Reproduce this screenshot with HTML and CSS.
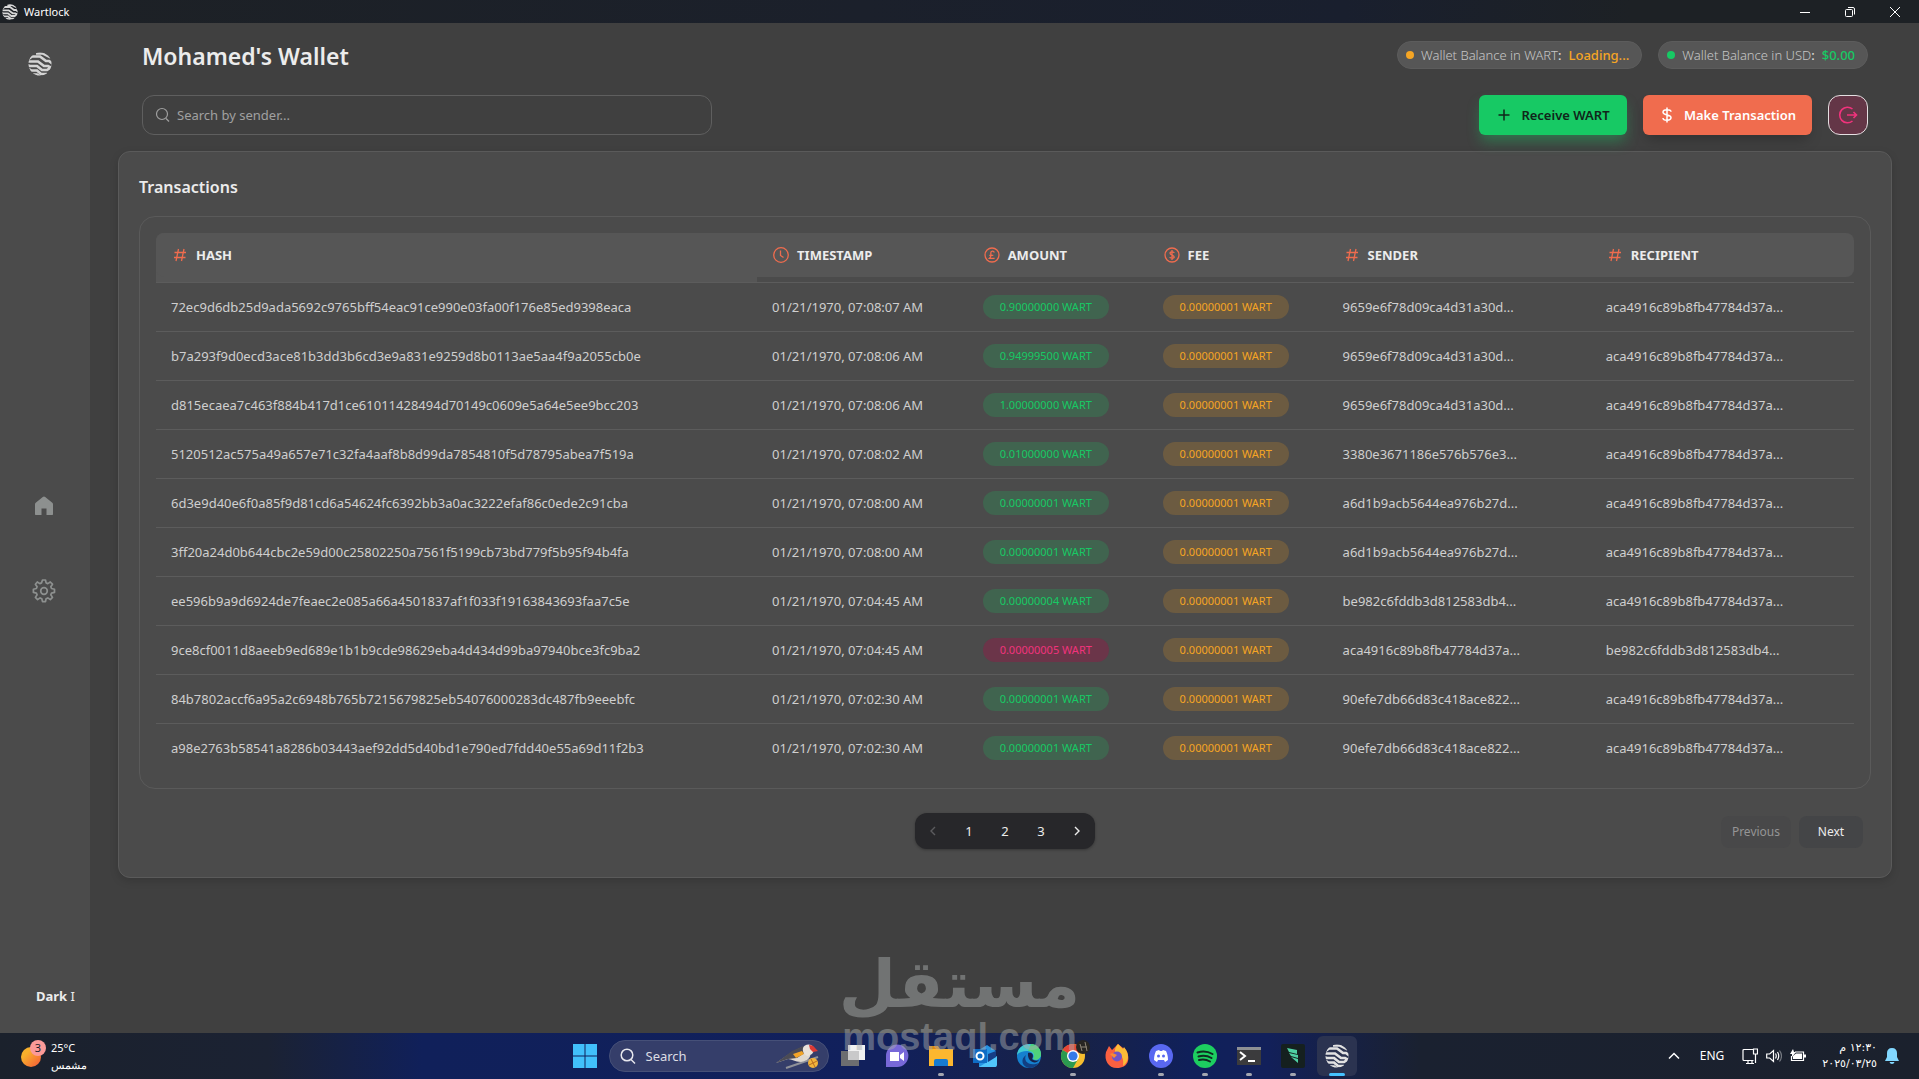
FILE: index.html
```html
<!DOCTYPE html>
<html lang="en">
<head>
<meta charset="utf-8">
<title>Wartlock</title>
<link rel="stylesheet" href="styles.css">
</head>
<body>
<svg class="defs" aria-hidden="true">
  <defs>
    <clipPath id="ball"><circle cx="12" cy="12" r="11.5"/></clipPath>
    <symbol id="logo" viewBox="0 0 24 24">
      <g clip-path="url(#ball)" fill="none" stroke="currentColor" stroke-width="2.7">
        <path d="M8 1.500h7l8 4M-1 8l5-3.500h8l6 4.500h3l4 3M-1 9.500h11l6 4.500h4l5 3M-1 13l3 1h7l5 4h5l6-4M-1 16l4 2.500h6l4 3.500h6M5 22.500h4l3 2"/>
      </g>
    </symbol>
    <symbol id="hash" viewBox="0 0 16 16">
      <path d="M6.500 2L4 14M12 2L9.500 14M2.500 5.500h11.500M2 10.500h11.500" fill="none" stroke="currentColor" stroke-width="1.300"/>
    </symbol>
  </defs>
</svg>
<div class="screen">
  <header class="titlebar">
    <svg class="titlebar-logo"><use href="#logo"/></svg>
    <span class="titlebar-name">Wartlock</span>
    <button class="winbtn" aria-label="Minimize"><svg viewBox="0 0 12 12"><path d="M1 6.500h10"/></svg></button>
    <button class="winbtn" aria-label="Restore"><svg viewBox="0 0 12 12"><rect x="1.500" y="3.500" width="7" height="7" rx="1"/><path d="M4 1.500h5a1.500 1.500 0 0 1 1.500 1.500v5.500"/></svg></button>
    <button class="winbtn" aria-label="Close"><svg viewBox="0 0 12 12"><path d="M1 1l10 10M11 1L1 11"/></svg></button>
  </header>

  <div class="app">
    <nav class="sidebar">
      <a class="brand" href="#" aria-label="Wartlock"><svg><use href="#logo"/></svg></a>
      <div class="nav-links">
        <a href="#" aria-label="Home"><svg viewBox="0 0 24 24" fill="currentColor"><path d="M12 2.500c.5 0 .8.2 1.200.5l6.800 5.500c.7.500 1 1 1 1.800V20c0 .7-.3 1-1 1h-5.500v-6.500h-5V21H4c-.7 0-1-.3-1-1v-9.700c0-.8.3-1.300 1-1.800L10.800 3c.4-.3.7-.5 1.200-.5z"/></svg></a>
        <a href="#" aria-label="Settings"><svg viewBox="0 0 24 24" fill="none" stroke="currentColor" stroke-width="1.700" stroke-linejoin="round"><circle cx="12" cy="12" r="3.300"/><path d="M10.500 1h3l.6 2.900 1.700.7L18.300 3l2.200 2.200-1.700 2.600.7 1.700 3 .8v3.100l-3 .7-.7 1.700 1.700 2.600-2.200 2.200-2.500-1.700-1.700.8-.6 2.900h-3l-.7-2.900-1.700-.8-2.500 1.700-2.200-2.200 1.700-2.600-.7-1.700-3-.7v-3.100l3-.8.7-1.700-1.700-2.600L5.300 3l2.500 1.600 1.700-.7z"/></svg></a>
      </div>
      <div class="theme">Dark <span>I</span></div>
    </nav>

    <main class="main">
      <div class="top">
        <h1>Mohamed's Wallet</h1>
        <div class="balance warn"><i class="dot"></i><span>Wallet Balance in WART<b>:</b></span><strong>Loading...</strong></div>
        <div class="balance good"><i class="dot"></i><span>Wallet Balance in USD<b>:</b></span><strong>$0.00</strong></div>
      </div>
      <div class="tools">
        <label class="search">
          <svg viewBox="0 0 16 16"><circle cx="7" cy="7" r="5.500"/><path d="M11 11.500l3 3"/></svg>
          <input type="text" placeholder="Search by sender..." aria-label="Search by sender">
        </label>
        <button class="btn receive"><svg viewBox="0 0 16 16"><path d="M8 2.500v11M2.500 8h11"/></svg>Receive WART</button>
        <button class="btn send"><svg viewBox="0 0 16 16"><path d="M8 .5v15M12 4.800C12 3.400 10.500 2.800 8 2.800S4 3.600 4 5.300C4 8.800 12 7 12 10.600c0 1.800-1.500 2.600-4 2.600s-4-.7-4-2.300"/></svg>Make Transaction</button>
        <button class="logout" aria-label="Log out"><svg viewBox="0 0 20 20"><path d="M14.500 4a7.800 7.800 0 1 0 0 12M9 10h9M15.500 7l3 3-3 3"/></svg></button>
      </div>

      <section class="card">
        <h2>Transactions</h2>
        <div class="table-box">
          <table>
            <colgroup><col class="c-hash"><col class="c-time"><col class="c-amount"><col class="c-fee"><col class="c-party"><col class="c-party"></colgroup>
            <thead>
              <tr>
                <th><div><svg><use href="#hash"/></svg>HASH</div></th>
                <th><div><svg viewBox="0 0 16 16"><circle cx="8" cy="8" r="7.300"/><path d="M7.500 3.500v5l3 2"/></svg>TIMESTAMP</div></th>
                <th><div><svg viewBox="0 0 16 16"><circle cx="8" cy="8" r="7"/><path d="M10.300 5.500c-.6-1.800-3.500-1.800-3.500.6 0 1.700.8 3.500-1.200 5.200h5M5.300 8.300h4"/></svg>AMOUNT</div></th>
                <th><div><svg viewBox="0 0 16 16"><circle cx="8" cy="8" r="7"/><path d="M8 3v10M10.200 6C10 4.500 6 4.300 6 6.200S10.200 8 10.200 9.900 6 11.500 5.800 10"/></svg>FEE</div></th>
                <th><div><svg><use href="#hash"/></svg>SENDER</div></th>
                <th><div><svg><use href="#hash"/></svg>RECIPIENT</div></th>
              </tr>
            </thead>
            <tbody>
              <tr><td>72ec9d6db25d9ada5692c9765bff54eac91ce990e03fa00f176e85ed9398eaca</td><td>01/21/1970, 07:08:07 AM</td><td><span class="pill in">0.90000000 WART</span></td><td><span class="pill fee">0.00000001 WART</span></td><td>9659e6f78d09ca4d31a30d...</td><td>aca4916c89b8fb47784d37a...</td></tr>
              <tr><td>b7a293f9d0ecd3ace81b3dd3b6cd3e9a831e9259d8b0113ae5aa4f9a2055cb0e</td><td>01/21/1970, 07:08:06 AM</td><td><span class="pill in">0.94999500 WART</span></td><td><span class="pill fee">0.00000001 WART</span></td><td>9659e6f78d09ca4d31a30d...</td><td>aca4916c89b8fb47784d37a...</td></tr>
              <tr><td>d815ecaea7c463f884b417d1ce61011428494d70149c0609e5a64e5ee9bcc203</td><td>01/21/1970, 07:08:06 AM</td><td><span class="pill in">1.00000000 WART</span></td><td><span class="pill fee">0.00000001 WART</span></td><td>9659e6f78d09ca4d31a30d...</td><td>aca4916c89b8fb47784d37a...</td></tr>
              <tr><td>5120512ac575a49a657e71c32fa4aaf8b8d99da7854810f5d78795abea7f519a</td><td>01/21/1970, 07:08:02 AM</td><td><span class="pill in">0.01000000 WART</span></td><td><span class="pill fee">0.00000001 WART</span></td><td>3380e3671186e576b576e3...</td><td>aca4916c89b8fb47784d37a...</td></tr>
              <tr><td>6d3e9d40e6f0a85f9d81cd6a54624fc6392bb3a0ac3222efaf86c0ede2c91cba</td><td>01/21/1970, 07:08:00 AM</td><td><span class="pill in">0.00000001 WART</span></td><td><span class="pill fee">0.00000001 WART</span></td><td>a6d1b9acb5644ea976b27d...</td><td>aca4916c89b8fb47784d37a...</td></tr>
              <tr><td>3ff20a24d0b644cbc2e59d00c25802250a7561f5199cb73bd779f5b95f94b4fa</td><td>01/21/1970, 07:08:00 AM</td><td><span class="pill in">0.00000001 WART</span></td><td><span class="pill fee">0.00000001 WART</span></td><td>a6d1b9acb5644ea976b27d...</td><td>aca4916c89b8fb47784d37a...</td></tr>
              <tr><td>ee596b9a9d6924de7feaec2e085a66a4501837af1f033f19163843693faa7c5e</td><td>01/21/1970, 07:04:45 AM</td><td><span class="pill in">0.00000004 WART</span></td><td><span class="pill fee">0.00000001 WART</span></td><td>be982c6fddb3d812583db4...</td><td>aca4916c89b8fb47784d37a...</td></tr>
              <tr><td>9ce8cf0011d8aeeb9ed689e1b1b9cde98629eba4d434d99ba97940bce3fc9ba2</td><td>01/21/1970, 07:04:45 AM</td><td><span class="pill out">0.00000005 WART</span></td><td><span class="pill fee">0.00000001 WART</span></td><td>aca4916c89b8fb47784d37a...</td><td>be982c6fddb3d812583db4...</td></tr>
              <tr><td>84b7802accf6a95a2c6948b765b7215679825eb54076000283dc487fb9eeebfc</td><td>01/21/1970, 07:02:30 AM</td><td><span class="pill in">0.00000001 WART</span></td><td><span class="pill fee">0.00000001 WART</span></td><td>90efe7db66d83c418ace822...</td><td>aca4916c89b8fb47784d37a...</td></tr>
              <tr><td>a98e2763b58541a8286b03443aef92dd5d40bd1e790ed7fdd40e55a69d11f2b3</td><td>01/21/1970, 07:02:30 AM</td><td><span class="pill in">0.00000001 WART</span></td><td><span class="pill fee">0.00000001 WART</span></td><td>90efe7db66d83c418ace822...</td><td>aca4916c89b8fb47784d37a...</td></tr>
            </tbody>
          </table>
        </div>
        <div class="pager">
          <div class="pages">
            <button disabled aria-label="Previous page"><svg viewBox="0 0 12 12"><path d="M8 2L4 6l4 4"/></svg></button>
            <button>1</button><button>2</button><button>3</button>
            <button aria-label="Next page"><svg viewBox="0 0 12 12"><path d="M4 2l4 4-4 4"/></svg></button>
          </div>
          <div class="steps"><button disabled>Previous</button><button>Next</button></div>
        </div>
      </section>
    </main>
  </div>

  <footer class="taskbar">
    <div class="weather">
      <svg viewBox="0 0 28 30"><defs><linearGradient id="sun" x1="0" y1="0" x2="1" y2="1"><stop offset=".3" stop-color="#f9b02c"/><stop offset="1" stop-color="#f4563a"/></linearGradient></defs><circle cx="11" cy="18" r="10" fill="url(#sun)"/><circle cx="18" cy="9" r="8" fill="#fb9a98"/><text x="18" y="13" text-anchor="middle" font-size="11" fill="#1b212e">3</text></svg>
      <div><div>25°C</div><div lang="ar">مشمس</div></div>
    </div>
    <div class="apps">
      <button aria-label="Start"><svg viewBox="0 0 24 24" fill="#41c0fb"><path d="M0 0h11.500v11.500H0zM12.500 0H24v11.500H12.500zM0 12.500h11.500V24H0zM12.500 12.500H24V24H12.500z"/></svg></button>
      <button class="task-search">
        <svg class="glass" viewBox="0 0 16 16"><circle cx="7" cy="7" r="5.800"/><path d="M11 11.500l4 4"/></svg>
        <span>Search</span>
        <svg class="bird" viewBox="0 0 44 26"><path d="M10 25L42 14" stroke="#8f9199" stroke-width="2"/><path d="M0 20l16-11 10-5 8 4c2 7-3 10-9 11-6 0-9-3-13-3z" fill="#ded8cf"/><path d="M0 20L16 8l11-5 3 6-9 6-9 1z" fill="#4b4b55"/><path d="M17 11l9-3 2 3-8 4z" fill="#f3a528"/><path d="M27 5c1-4 8-5 10-1l1 4-2 3-4 2c-3 0-6-4-5-8z" fill="#e9e2da"/><path d="M33 2c3 0 5 1 6 3l3 3-5 1-3-3z" fill="#dd3a35"/><circle cx="37" cy="20" r="5" fill="#f2b43b"/><path d="M33 22l8-4M35 16l4 8" stroke="#b86c22"/></svg>
      </button>
      <button aria-label="Task view"><svg viewBox="0 0 24 24"><path d="M0 7h18v15H0z" fill="#6c6d70"/><path d="M7 1h17v15H7z" fill="#f1f1f1"/><path d="M7 7h11v9H7z" fill="#c9c9ca"/></svg></button>
      <button aria-label="Chat"><svg viewBox="0 0 24 24"><path d="M1 23V12A11.200 11.200 0 1 1 12 23z" fill="#7768d8"/><path d="M5 8h9v9H5zM15 11l4-3v9l-4-3z" fill="#fff"/></svg></button>
      <button class="run" aria-label="File Explorer"><svg viewBox="0 0 24 24"><path d="M0 2h9l2 3H0z" fill="#e08b0f"/><path d="M0 5h24v17H0z" fill="#fcb72f"/><path d="M5 22v-5q0-2 2-2h10q2 0 2 2v5z" fill="#177bd0"/></svg></button>
      <button aria-label="Outlook"><svg viewBox="0 0 24 24"><path d="M6 6l8-5 9 6v16H6z" fill="#2693e2"/><path d="M6 23l18-11v9q0 2-2 2z" fill="#50c5fa"/><path d="M15 10l8-3v6l-8 5z" fill="#163e86"/><path d="M0 5h14v14H0z" fill="#0f6cc4"/><circle cx="7" cy="12" r="3.500" fill="none" stroke="#fff" stroke-width="2"/></svg></button>
      <button aria-label="Edge"><svg viewBox="0 0 24 24"><circle cx="12" cy="12" r="12" fill="#1580ce"/><path d="M0 11C1-3 23-4 24 10c0 5-5 7-8 5 2-4-1-8-6-8-4 0-8 1-10 4z" fill="#41c9d2"/><path d="M14 0c6 0 10 5 10 10s-5 7-8 5c3-5 0-8-5-8z" fill="#4fd27b"/><path d="M9 11c-3 6 3 12 13 8-3 4-7 5-10 5-7-1-9-9-3-13z" fill="#123f82"/><path d="M11 9c5-1 6 3 4 6 2 2 5 2 7 1-3 5-12 2-11-7z" fill="#16214a"/></svg></button>
      <button class="run" aria-label="Chrome"><svg class="wide" viewBox="0 0 30 24"><circle cx="12" cy="12" r="12" fill="#f6be2f"/><path d="M12 12L1.600 6A12 12 0 0 1 22.400 6z" fill="#e94436"/><path d="M12 12L1.600 6A12 12 0 0 0 12 24l5-9z" fill="#2b9a50"/><circle cx="12" cy="12" r="6" fill="#fff"/><circle cx="12" cy="12" r="4.600" fill="#3479ea"/><circle cx="22" cy="3" r="7" fill="#272522"/><path d="M19 0l2 7M24-2l2 9M20 3h6" stroke="#8f8778"/></svg></button>
      <button aria-label="Firefox"><svg viewBox="0 0 24 24"><path d="M1 8l3-6 3 4 6-6 5 4 3 2c5 9 2 18-9 18C3 24-1 16 1 8z" fill="#fa6040"/><path d="M13 0l5 5 1-2c6 7 5 15-1 19 1-8-1-10-5-12-5-1-3-7 0-10z" fill="#fcbc37"/><circle cx="12" cy="12.500" r="5" fill="#7155c8"/><path d="M5 10c3-2 5 0 7 1l-3 3z" fill="#fc8a35"/></svg></button>
      <button class="run" aria-label="Discord"><svg viewBox="0 0 24 24"><circle cx="12" cy="12" r="12" fill="#5968f1"/><path d="M5 16c0-4 1-7 2-9l3-1 1 1h2l1-1 3 1c1 2 2 5 2 9l-3 2-1-2H9l-1 2z" fill="#fff"/><circle cx="9.500" cy="12" r="1.500" fill="#5968f1"/><circle cx="14.500" cy="12" r="1.500" fill="#5968f1"/></svg></button>
      <button class="run" aria-label="Spotify"><svg viewBox="0 0 24 24"><circle cx="12" cy="12" r="12" fill="#1dce60"/><path d="M4.500 8.500q8-2.500 15 1.500M5.500 12.500q7-2 13 1.500M6 16q6-1.500 11 1.500" fill="none" stroke="#102a20" stroke-width="2" stroke-linecap="round"/></svg></button>
      <button class="run" aria-label="Terminal"><svg viewBox="0 0 24 24"><path d="M0 3h24v18H0z" fill="#3b3b3d"/><path d="M0 3h24v3H0z" fill="#8e9094"/><path d="M3 8l5 4-5 4M11 17h7" fill="none" stroke="#fff" stroke-width="2"/></svg></button>
      <button class="run" aria-label="Warp"><svg viewBox="0 0 24 24"><rect width="24" height="24" rx="2" fill="#15201f"/><path d="M6 4l10 2v4L8 8zM8 9l9 2v3l-7-2zM10 13l7 2v4z" fill="#4fd0a3"/></svg></button>
      <button class="active" aria-label="Wartlock"><svg><use href="#logo"/></svg></button>
    </div>
    <div class="tray">
      <svg class="chev" viewBox="0 0 12 12"><path d="M1 8.500l5-5 5 5"/></svg>
      <span class="lang">ENG</span>
      <svg viewBox="0 0 16 16"><path d="M11 1.500H2q-1 0-1 1v9q0 1 1 1h9.500M4 15.500h8M6 12.500v3M10 12.500v3M11.500 1h4v5h-4zM13.500 6v9"/></svg>
      <svg viewBox="0 0 16 16"><path d="M.7 6v4h3l3.800 3.500v-11L3.700 6zM9.500 5.500q1.500 2.500 0 5M11.500 4q2.500 4 0 8"/><path d="M13.500 2.500q4 5.500 0 11" opacity=".4"/></svg>
      <svg viewBox="0 0 16 16"><path d="M5 4h8.500v8.500h-12V8"/><path d="M6 5.500h6v5.500H3V8zM3 1L0 6h2v3l4-5H4zM14 6.500h2v3h-2z" fill="currentColor" stroke="none"/></svg>
      <div class="clock" lang="ar" dir="rtl"><div>١٢:٣٠ م</div><div dir="ltr">٢٠٢٥/٠٣/٢٥</div></div>
      <svg class="bell" viewBox="0 0 14 16"><path d="M7 0c3.300 0 5 2 5 5v4l2 4H0l2-4V5c0-3 1.700-5 5-5zM4.500 14h5Q9 16 7 16t-2.500-2z"/></svg>
    </div>
  </footer>

  <div class="watermark"><div class="wm-ar" lang="ar">مستقل</div><div class="wm-en">mostaql.com</div></div>
</div>
</body>
</html>
```
FILE: styles.css
```css
* { box-sizing: border-box; }

body {
  margin: 0;
  background: #404040;
  color: #ececec;
  font: 13px/20px "Noto Sans", "Open Sans", sans-serif;
}

button, input { font: inherit; color: inherit; }
button { border: 0; padding: 0; background: none; cursor: pointer; }
a { color: inherit; }
.defs { position: absolute; width: 0; height: 0; }

.screen {
  position: relative;
  display: flex;
  flex-direction: column;
  min-height: 100vh;
}

/* Window title bar */
.titlebar {
  display: flex;
  align-items: center;
  height: 23px;
  padding: 0 2px;
  background: linear-gradient(90deg, #1d2125 0%, #1b202b 45%, #191f2e 70%, #1d2125 85%);
  color: #fff;
  font-size: 11px;
}
.titlebar-logo { width: 16px; height: 16px; color: #d8d8d8; }
.titlebar-name { margin-left: 6px; flex: 1; }
.winbtn { width: 45px; height: 22px; display: grid; place-items: center; }
.winbtn svg { width: 12px; height: 12px; fill: none; stroke: #fff; }

.app { flex: 1; display: flex; }

/* Sidebar */
.sidebar {
  width: 90px;
  flex: none;
  display: flex;
  flex-direction: column;
  background: #4b4b4b;
}
.brand { margin: 29px 0 0 28px; color: #d4d4d4; }
.brand svg { display: block; width: 24px; height: 24px; }
.nav-links {
  flex: 1;
  display: flex;
  flex-direction: column;
  align-items: center;
  justify-content: center;
  gap: 61px;
  padding: 34px 2px 0 0;
  color: #8d908f;
}
.nav-links svg { display: block; width: 24px; height: 24px; }
.theme { margin: 0 0 27px 36px; white-space: nowrap; font-weight: 700; }
.theme span { font-weight: 400; }

/* Main column */
.main { flex: 1; min-width: 0; padding: 18px 27px 0 28px; }
.top { display: flex; align-items: center; gap: 16px; padding: 0 24px; height: 28px; }
h1 { margin: 0; flex: 1; font-size: 23px; line-height: 28px; font-weight: 600; padding-top: 2px; }
.balance {
  display: flex;
  align-items: center;
  gap: 7px;
  height: 28px;
  padding: 0 12px 0 8px;
  border-radius: 14px;
  background: #565656;
  border: 1px solid #5c5c5c;
  color: #c6c6c6;
  font-weight: 300;
}
.balance b { color: #e4e4e4; font-weight: 400; }
.balance strong { font-weight: 500; }
.dot { width: 8px; height: 8px; border-radius: 50%; }
.warn strong { color: #f5a524; }
.warn .dot { background: #f5a524; }
.good strong { color: #17c964; }
.good .dot { background: #17c964; }

.tools { display: flex; gap: 16px; margin: 26px 0 16px; padding: 0 24px; height: 40px; }
.search {
  display: flex;
  align-items: center;
  gap: 6px;
  width: 570px;
  margin-right: auto;
  padding: 0 12px;
  border: 1px solid #5f5f5f;
  border-radius: 12px;
}
.search svg { width: 16px; height: 16px; fill: none; stroke: #a0a0a0; stroke-width: 1.2; }
.search input { flex: 1; border: 0; outline: 0; padding: 0; background: none; }
.search input::placeholder { color: #a0a0a0; opacity: 1; }
.btn {
  display: flex;
  align-items: center;
  justify-content: center;
  gap: 9px;
  border-radius: 6px;
  font-weight: 600;
}
.btn svg { width: 16px; height: 16px; fill: none; stroke: currentColor; stroke-width: 1.5; }
.receive { width: 148px; background: #17c964; color: #10251a; box-shadow: 0 8px 14px -2px rgba(23, 201, 100, .4); }
.send { width: 169px; background: #f06c4e; color: #fff; box-shadow: 0 8px 14px -4px rgba(0, 0, 0, .25); }
.logout {
  width: 40px;
  display: grid;
  place-items: center;
  border: 1px solid #e4dfe1;
  border-radius: 12px;
  background: #643647;
  color: #f0337c;
}
.logout svg { width: 20px; height: 20px; fill: none; stroke: currentColor; stroke-width: 1.6; }

/* Transactions card */
.card {
  padding: 24px 20px 28px;
  border: 1px solid #5a5a5a;
  border-radius: 12px;
  background: #4b4b4b;
  box-shadow: 0 3px 8px rgba(0, 0, 0, .15);
}
h2 { margin: 0 0 18px; font-size: 16px; line-height: 22px; font-weight: 600; }
.table-box { padding: 16px; border: 1px solid #5a5a5a; border-radius: 16px; }
table { width: 100%; table-layout: fixed; border-collapse: separate; border-spacing: 0; }
.c-hash { width: 35.4%; }
.c-time { width: 12.4%; }
.c-amount, .c-fee { width: 10.6%; }
.c-party { width: 15.5%; }
th { padding: 0 0 5px; text-align: left; font-weight: 700; }
th div { display: flex; align-items: center; gap: 8px; height: 44px; padding-left: 16px; background: #565656; }
th:first-child { background: #565656; border-radius: 8px 0 0 0; }
th:first-child div { border-radius: 8px 0 0 8px; }
th:last-child div { border-radius: 0 8px 8px 0; }
th svg { width: 16px; height: 16px; fill: none; stroke: currentColor; stroke-width: 1.3; color: #f06c4e; }
td { height: 49px; padding: 0 0 0 15px; border-top: 1px solid #5c5c5c; color: #cfcfcf; white-space: nowrap; }
.pill { display: inline-block; height: 24px; padding: 0 17px; border-radius: 12px; font-size: 11px; line-height: 24px; vertical-align: middle; }
.in { background: #40644f; color: #17c964; }
.fee { background: #6c5b41; color: #f5a524; }
.out { background: #6b3549; color: #f0337c; }

.pager { display: grid; grid-template-columns: 1fr auto 1fr; align-items: center; margin-top: 24px; }
.pages { grid-column: 2; display: flex; border-radius: 12px; background: #27272a; box-shadow: 0 1px 3px rgba(0, 0, 0, .3); }
.pages button { width: 36px; height: 36px; display: grid; place-items: center; }
.pages svg { width: 12px; height: 12px; fill: none; stroke: currentColor; stroke-width: 1.4; }
.pages button:disabled { color: #5b5b5e; }
.steps { display: flex; justify-content: flex-end; gap: 8px; padding: 1px 8px 0 0; }
.steps button { height: 32px; min-width: 64px; padding: 0 11px; border-radius: 8px; background: #444547; font-size: 12px; }
.steps button:disabled { background: #484849; color: #959595; }

/* Desktop taskbar */
.taskbar {
  display: grid;
  grid-template-columns: 1fr auto 1fr;
  align-items: center;
  height: 46px;
  background: linear-gradient(90deg, #1b212c 0%, #1b2233 14%, #10205a 22%, #11205c 46%, #182246 56%, #10205a 62%, #12205a 66%, #1a2130 74%, #1b212d 100%);
  color: #fff;
}
.weather { display: flex; gap: 3px; padding-left: 20px; font-size: 11px; line-height: 17px; }
.weather svg { width: 28px; height: 30px; }
.apps { display: flex; align-items: center; padding-left: 2px; }
.apps button { position: relative; width: 44px; height: 40px; display: grid; place-items: center; }
.apps button svg { display: block; width: 24px; height: 24px; overflow: visible; }
.apps button .wide { width: 30px; margin-left: 6px; }
.apps .task-search {
  display: flex;
  align-items: center;
  gap: 10px;
  width: 220px;
  height: 32px;
  margin: 0 2px;
  padding: 0 8px 0 10px;
  border: 1px solid #465078;
  border-radius: 16px;
  background: #353e6a;
  color: #dcdde4;
  font-size: 13px;
}
.task-search span { flex: 1; text-align: left; }
.apps .task-search .glass { width: 16px; height: 16px; fill: none; stroke: #e8e8ee; stroke-width: 1.5; }
.apps .task-search .bird { width: 44px; height: 26px; }
.run::after, .active::after {
  content: "";
  position: absolute;
  bottom: 0;
  left: 50%;
  width: 6px;
  height: 3px;
  margin-left: -3px;
  border-radius: 2px;
  background: #a3a6b0;
}
.apps .active { width: 40px; margin: 0 2px; border-radius: 6px; background: #2b3350; color: #e2e2e2; }
.active::after { width: 16px; margin-left: -8px; background: #45c2ff; }
.tray { display: flex; align-items: center; justify-content: flex-end; gap: 8px; padding-right: 20px; }
.tray svg { width: 16px; height: 16px; fill: none; stroke: currentColor; stroke-width: 1.2; }
.tray .chev { width: 12px; height: 12px; stroke-width: 1.5; }
.lang { margin: 0 10px 0 12px; font-size: 12px; }
.clock { margin-left: 8px; font: 11px/16px "DejaVu Sans", sans-serif; }
.clock div { text-align: right; }
.tray .bell { width: 14px; height: 16px; fill: #82d8ff; stroke: none; }

/* Site watermark over the page */
.watermark {
  position: absolute;
  bottom: 22px;
  left: 0;
  right: 0;
  text-align: center;
  color: #a8acac;
  opacity: .48;
  pointer-events: none;
}
.wm-ar { font: 700 66px/64px "DejaVu Sans", sans-serif; }
.wm-en { font: 700 38px/40px "Liberation Sans", sans-serif; }
```
